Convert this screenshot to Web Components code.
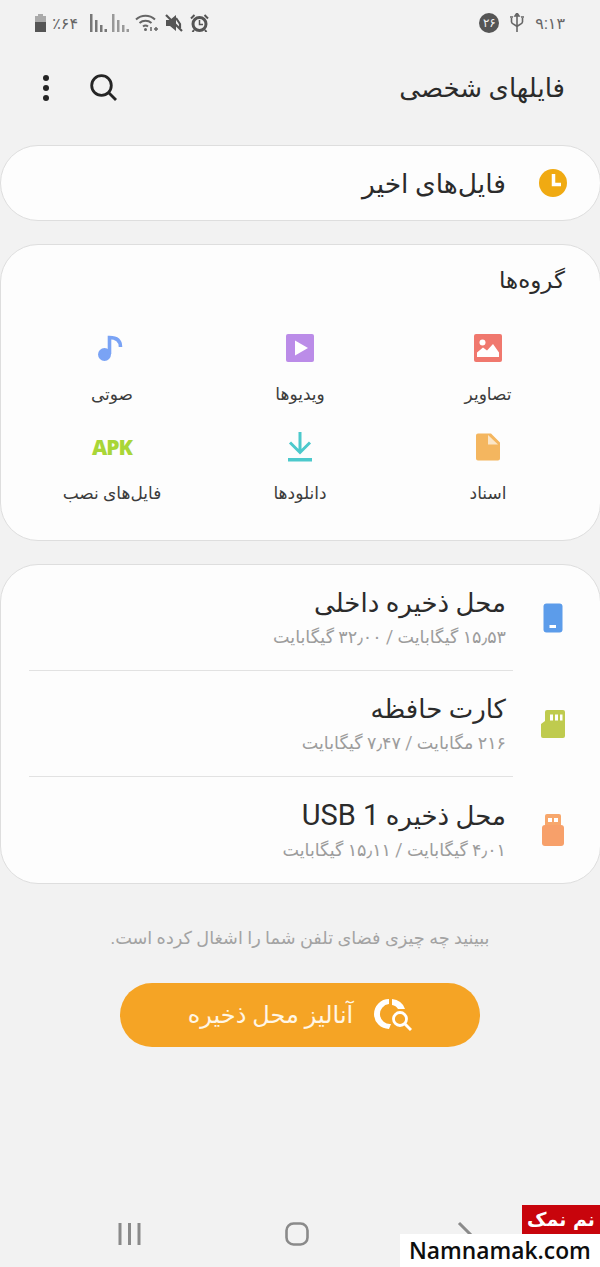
<!DOCTYPE html>
<html lang="fa">
<head>
<meta charset="utf-8">
<title>فایلهای شخصی</title>
<style>
  html, body { margin: 0; padding: 0; background: #f2f2f2; }
  body { font-family: Roboto, "DejaVu Sans", sans-serif; }
</style>
</head>
<body>
<my-files-app>
  <status-bar slot="status"></status-bar>
  <title-bar slot="title">فایلهای شخصی</title-bar>

  <round-card>
    <recent-row>
      <svg slot="icon" width="28" height="28" viewBox="0 0 28 28"><circle cx="14" cy="14" r="14" fill="#f0aa12"/><path d="M14.500 5v10.500H22" fill="none" stroke="#fff" stroke-width="3.500"/></svg>
      فایل‌های اخیر
    </recent-row>
  </round-card>

  <round-card>
    <category-grid heading="گروه‌ها">
      <category-item label="تصاویر">
        <svg width="28" height="28" viewBox="0 0 28 28"><rect width="28" height="28" rx="2" fill="#f0786e"/><circle cx="8.500" cy="8.500" r="3" fill="#fff"/><path d="M3 23v-4.500l6-5 4 3 6-6.500 6 8.500v4.500z" fill="#fff"/></svg>
      </category-item>
      <category-item label="ویدیوها">
        <svg width="28" height="28" viewBox="0 0 28 28"><rect width="28" height="28" rx="2" fill="#bb8ce8"/><path d="M9 6.500l13 7.500-13 7.500z" fill="#fff"/></svg>
      </category-item>
      <category-item label="صوتی">
        <svg width="28" height="28" viewBox="0 0 28 28"><circle cx="6.500" cy="20.500" r="6.500" fill="#7aa3f5"/><path d="M11.500 20V3.500c7 0 11 3 11 9.500" fill="none" stroke="#7aa3f5" stroke-width="3.600"/></svg>
      </category-item>
      <category-item label="اسناد">
        <svg width="28" height="28" viewBox="0 0 28 28"><path d="M4 .5h13l9 9v16a2 2 0 0 1-2 2H4a2 2 0 0 1-2-2V2.500a2 2 0 0 1 2-2z" fill="#f4b65f"/><path d="M14 2l10 9.500H14z" fill="#fbe6c8"/></svg>
      </category-item>
      <category-item label="دانلودها">
        <svg width="28" height="32" viewBox="0 0 28 32"><path d="M14 1v20M4 11.500L14 21.500 24 11.500" fill="none" stroke="#4cc9cc" stroke-width="3"/><rect x="2" y="27" width="24" height="3.500" fill="#4cc9cc"/></svg>
      </category-item>
      <category-item label="فایل‌های نصب">
        <span style="font:800 21px/28px 'Open Sans',sans-serif;color:#a9d637;letter-spacing:-1px">APK</span>
      </category-item>
    </category-grid>
  </round-card>

  <round-card>
    <storage-item name="محل ذخیره داخلی" usage="۱۵٫۵۳ گیگابایت / ۳۲٫۰۰ گیگابایت">
      <svg width="20" height="30" viewBox="0 0 20 30"><rect width="19" height="29" x=".5" y=".5" rx="3" fill="#5c9cea"/><rect x="6.500" y="22" width="6.500" height="3" fill="#fff"/></svg>
    </storage-item>
    <storage-item name="کارت حافظه" usage="۲۱۶ مگابایت / ۷٫۴۷ گیگابایت">
      <svg width="24" height="28" viewBox="0 0 24 28"><path d="M6 0h16a2 2 0 0 1 2 2v24a2 2 0 0 1-2 2H2a2 2 0 0 1-2-2V14l4-3V2a2 2 0 0 1 2-2z" fill="#bfcb4e"/><path d="M9 4.500h3v6H9zM14 4.500h3v6h-3zM19 4.500h2.500v6H19z" fill="#fff"/></svg>
    </storage-item>
    <storage-item name="محل ذخیره" latin="USB 1" usage="۴٫۰۱ گیگابایت / ۱۵٫۱۱ گیگابایت">
      <svg width="22" height="32" viewBox="0 0 22 32"><path d="M3 2a2 2 0 0 1 2-2h12a2 2 0 0 1 2 2v10H3z" fill="#f7a76c"/><rect y="11" width="22" height="21" rx="3" fill="#f7a06a"/><path d="M6 4h4v4H6zM12 4h4v4h-4z" fill="#fff"/></svg>
    </storage-item>
  </round-card>

  <analyze-panel hint="ببینید چه چیزی فضای تلفن شما را اشغال کرده است." label="آنالیز محل ذخیره"></analyze-panel>

  <nav-bar slot="nav"></nav-bar>
  <site-badge slot="badge"></site-badge>
</my-files-app>

<script>
// small helper, every element just sets its own shadow html
function shadow(el, html) {
  el.attachShadow({ mode: 'open' }).innerHTML = html;
}

class MyFilesApp extends HTMLElement {
  connectedCallback() {
    shadow(this, `
      <style>
        :host { display: flex; flex-direction: column; position: relative; width: 600px; height: 1267px; overflow: hidden; background: #f2f2f2; }
        .cards { display: flex; flex-direction: column; gap: 23px; }
        .badge { position: absolute; right: 0; bottom: 0; }
        .nav { margin-top: auto; }
      </style>
      <slot name="status"></slot>
      <slot name="title"></slot>
      <div class="cards"><slot></slot></div>
      <div class="nav"><slot name="nav"></slot></div>
      <div class="badge"><slot name="badge"></slot></div>`);
  }
}

class StatusBar extends HTMLElement {
  connectedCallback() {
    const bars = `<svg width="17" height="18" viewBox="0 0 17 18" fill="#777"><rect x="0" y="0" width="2.500" height="18"/><rect x="5" y="6" width="2.500" height="12"/><rect x="10" y="11" width="2.500" height="7"/><rect x="14.500" y="15" width="2.500" height="3"/></svg>`;
    shadow(this, `
      <style>
        :host { display: flex; justify-content: space-between; align-items: center; height: 46px; padding: 0 35px; box-sizing: border-box; color: #666; font-size: 16px; }
        .side { display: flex; align-items: center; }
        .pct { margin: 0 12px 0 4px; width: 28px; white-space: nowrap; }
        .badge { width: 20px; height: 20px; border-radius: 50%; background: #555; color: #f2f2f2; font-size: 12px; display: flex; align-items: center; justify-content: center; margin-right: 11px; }
        .time { margin-left: 11px; font-size: 16px; }
        svg { display: block; }
      </style>
      <div class="side">
        <svg width="11" height="18" viewBox="0 0 11 18"><path d="M3 0h5v2h3v16H0V2h3z" fill="#aaa"/><rect y="8" width="11" height="10" fill="#555"/></svg>
        <span class="pct" dir="rtl">٪۶۴</span>
        ${bars}
        <span style="width:5px"></span>
        ${bars.replace('#777', '#999')}
        <span style="width:6px"></span>
        <svg width="24" height="18" viewBox="0 0 24 18" fill="none" stroke="#666" stroke-width="2"><path d="M1 5.500c5.500-5 13.500-5 19 0M4.500 9c3.500-3 8.500-3 12 0M8 12.500c1.500-1.200 3.500-1.200 5 0"/><circle cx="10.500" cy="15.500" r="1.500" fill="#666" stroke="none"/><path d="M16 13v4M21 13v4M19 15h4" stroke-width="1.500"/></svg>
        <span style="width:6px"></span>
        <svg width="18" height="18" viewBox="0 0 18 18"><path d="M1 6h4l6-5v16l-6-5H1z" fill="#555"/><path d="M11 4l4 6v4M1 1l16 16" fill="none" stroke="#555" stroke-width="2.200"/></svg>
        <span style="width:7px"></span>
        <svg width="19" height="18" viewBox="0 0 19 18"><circle cx="9.500" cy="10" r="6.500" fill="none" stroke="#555" stroke-width="3"/><path d="M9.500 6v4.500H13" fill="none" stroke="#555" stroke-width="1.500"/><path d="M1 4.500L4.500 1M18 4.500L14.500 1M4 16l-1.500 2M15 16l1.500 2" stroke="#555" stroke-width="2"/></svg>
      </div>
      <div class="side">
        <span class="badge">۲۶</span>
        <svg width="14" height="20" viewBox="0 0 14 20" fill="none" stroke="#666" stroke-width="1.600"><path d="M7 2v17M1.500 5v4c0 2.500 5.500 3 5.500 5M12.500 5v4c0 2.500-5.500 3-5.500 5"/><path d="M7 0l2 3H5zM0 4h3M11 4h3"/></svg>
        <span class="time">۹:۱۳</span>
      </div>`);
  }
}

class TitleBar extends HTMLElement {
  connectedCallback() {
    shadow(this, `
      <style>
        :host { display: flex; align-items: center; height: 99px; padding: 0 35px 0 43px; box-sizing: border-box; color: #2b2b2b; font-size: 26px; }
        .dots { display: flex; flex-direction: column; gap: 4px; width: 47px; margin-top: -16px; }
        .dots i { width: 6px; height: 6px; border-radius: 50%; background: #252525; }
        svg { margin-top: -16px; }
        .name { margin: -16px 0 0 auto; }
      </style>
      <div class="dots"><i></i><i></i><i></i></div>
      <svg width="27" height="27" viewBox="0 0 27 27" fill="none" stroke="#252525" stroke-width="2.800"><circle cx="11.500" cy="11.500" r="9.800"/><path d="M18.500 18.500L26 26"/></svg>
      <span class="name" dir="rtl"><slot></slot></span>`);
  }
}

class RoundCard extends HTMLElement {
  connectedCallback() {
    shadow(this, `
      <style>
        :host { display: block; background: #fdfdfd; border: 1px solid #dedede; border-radius: 38px; box-sizing: border-box; overflow: hidden; margin: 0 -1px 0 0; }
      </style>
      <slot></slot>`);
  }
}

class RecentRow extends HTMLElement {
  connectedCallback() {
    shadow(this, `
      <style>
        :host { display: flex; direction: rtl; align-items: center; height: 74px; padding-right: 33px; color: #2b2b2b; font-size: 26.500px; }
        .icon { display: flex; margin-left: 33px; }
      </style>
      <span class="icon"><slot name="icon"></slot></span>
      <span><slot></slot></span>`);
  }
}

class CategoryGrid extends HTMLElement {
  connectedCallback() {
    shadow(this, `
      <style>
        :host { display: block; direction: rtl; height: 295px; padding: 21px 35px 0 0; box-sizing: border-box; color: #2b2b2b; }
        h2 { margin: 0; font-size: 23px; font-weight: 400; line-height: 30px; }
        .grid { display: grid; grid-template-columns: repeat(3, 188px); margin: 36px 18px 0 0; position: relative; right: -35px; width: 564px; }
      </style>
      <h2>${this.getAttribute('heading')}</h2>
      <div class="grid"><slot></slot></div>`);
  }
}

class CategoryItem extends HTMLElement {
  connectedCallback() {
    shadow(this, `
      <style>
        :host { display: flex; flex-direction: column; align-items: center; height: 99px; }
        .pic { height: 32px; display: flex; align-items: center; justify-content: center; }
        .label { margin-top: 18px; font-size: 17px; line-height: 24px; color: #3c3c3c; white-space: nowrap; }
      </style>
      <div class="pic"><slot></slot></div>
      <div class="label">${this.getAttribute('label')}</div>`);
  }
}

class StorageItem extends HTMLElement {
  connectedCallback() {
    const latin = this.getAttribute('latin');
    shadow(this, `
      <style>
        :host { display: flex; direction: rtl; align-items: center; height: 106px; padding-right: 35px; position: relative; box-sizing: border-box; }
        :host(:not(:last-child))::after { content: ""; position: absolute; left: 28px; right: 87px; bottom: 0; height: 1px; background: #e2e2e2; }
        .pic { width: 24px; display: flex; justify-content: center; margin-left: 35px; }
        .name { font-size: 26px; line-height: 32px; color: #2b2b2b; }
        .name b { font-size: 29px; font-weight: 400; }
        .usage { font-size: 17.500px; line-height: 24px; color: #9c9c9c; margin-top: 6px; white-space: nowrap; }
      </style>
      <div class="pic"><slot></slot></div>
      <div>
        <div class="name">${this.getAttribute('name')}${latin ? ` <b>${latin}</b>` : ''}</div>
        <div class="usage">${this.getAttribute('usage')}</div>
      </div>`);
  }
}

class AnalyzePanel extends HTMLElement {
  connectedCallback() {
    shadow(this, `
      <style>
        :host { display: flex; flex-direction: column; align-items: center; padding-top: 19px; }
        .hint { font-size: 17.700px; line-height: 24px; color: #a3a3a3; white-space: nowrap; }
        button { all: unset; margin-top: 33px; width: 360px; height: 64px; border-radius: 32px; background: #f5a425; color: #fff6e6; display: flex; direction: rtl; align-items: center; justify-content: center; gap: 21px; font-size: 24px; }
        svg { display: block; }
      </style>
      <div class="hint" dir="rtl">${this.getAttribute('hint')}</div>
      <button>
        <svg width="38" height="34" viewBox="0 0 38 34"><path d="M15 1a15 15 0 0 0 0 30l2-5a10 10 0 0 1-2-20z" fill="#fff"/><path d="M18 1a15 15 0 0 1 13 10h-7a8 8 0 0 0-6-4z" fill="#fff"/><circle cx="26" cy="21" r="6.500" fill="none" stroke="#fff" stroke-width="2.800"/><path d="M31 26l6 6" stroke="#fff" stroke-width="3"/></svg>
        <span>${this.getAttribute('label')}</span>
      </button>`);
  }
}

class NavBar extends HTMLElement {
  connectedCallback() {
    shadow(this, `
      <style>
        :host { display: block; height: 67px; }
        .row { display: flex; align-items: center; height: 67px; box-sizing: border-box; }
        svg { display: block; }
      </style>
      <div class="row">
        <svg style="margin-left:118px" width="23" height="24" viewBox="0 0 23 24" stroke="#8a8a8a" stroke-width="3"><path d="M2 1v22M11.500 1v22M21 1v22"/></svg>
        <svg style="margin-left:144px" width="24" height="24" viewBox="0 0 24 24" fill="none" stroke="#8a8a8a" stroke-width="2.600"><rect x="1.500" y="1.500" width="21" height="21" rx="7"/></svg>
        <svg style="margin-left:148px" width="16" height="26" viewBox="0 0 16 26" fill="none" stroke="#8a8a8a" stroke-width="3"><path d="M2 2l11 11L2 24"/></svg>
      </div>`);
  }
}

class SiteBadge extends HTMLElement {
  connectedCallback() {
    shadow(this, `
      <style>
        :host { display: flex; flex-direction: column; align-items: flex-end; }
        .red { width: 78px; height: 29px; background: #c8040c; color: #fff; font: 700 19px/29px "DejaVu Sans", sans-serif; text-align: center; white-space: nowrap; }
        .white { width: 200px; height: 33px; background: #fff; color: #0d0d0d; font: 600 22.800px/33px "Open Sans", sans-serif; padding-left: 9px; box-sizing: border-box; white-space: nowrap; }
      </style>
      <div class="red" dir="rtl">نم نمک</div>
      <div class="white">Namnamak.com</div>`);
  }
}

customElements.define('my-files-app', MyFilesApp);
customElements.define('status-bar', StatusBar);
customElements.define('title-bar', TitleBar);
customElements.define('round-card', RoundCard);
customElements.define('recent-row', RecentRow);
customElements.define('category-grid', CategoryGrid);
customElements.define('category-item', CategoryItem);
customElements.define('storage-item', StorageItem);
customElements.define('analyze-panel', AnalyzePanel);
customElements.define('nav-bar', NavBar);
customElements.define('site-badge', SiteBadge);
</script>
</body>
</html>
